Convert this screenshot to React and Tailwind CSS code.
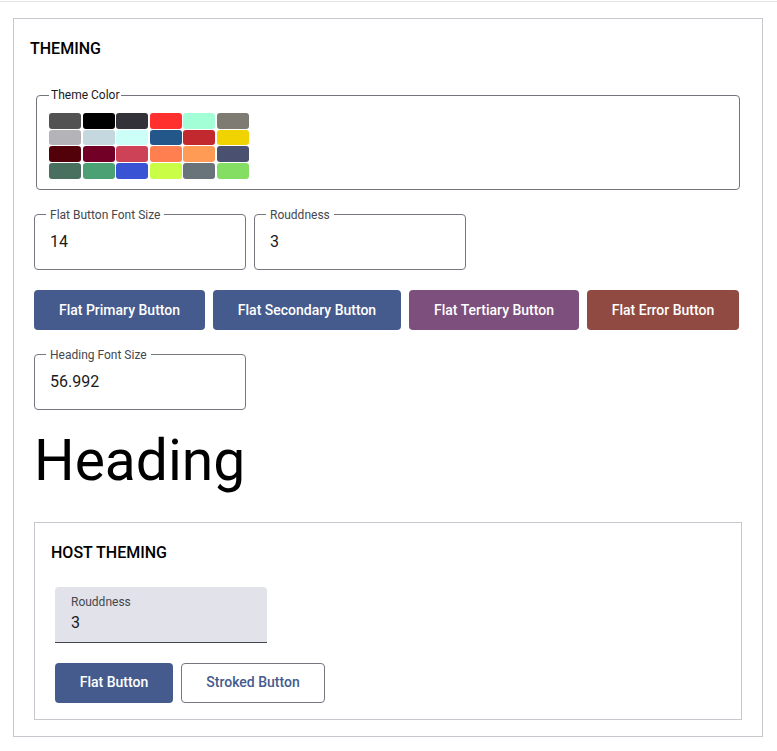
import React from "react";

const swatches = [
  ["#525252", "#000000", "#333238", "#ff302e", "#a3ffd6", "#7e7b73"],
  ["#b3b3b8", "#c5d8e0", "#ccfff7", "#235789", "#c1292e", "#f1d302"],
  ["#52000a", "#720026", "#ce4257", "#ff7f51", "#ff9b54", "#4a5170"],
  ["#49705e", "#4ba173", "#3853d4", "#c9fd46", "#68737a", "#83de63"],
];

function OutlinedField({ label, value }) {
  return (
    <fieldset className="w-[212px] border border-[#74777f] rounded-[4px] pl-[15px] pr-[15px] pt-[7px] pb-[15px]">
      <legend className="-ml-1 px-1 text-[12px] leading-4 text-[#44474e]">{label}</legend>
      <div className="text-[16px] leading-6 text-[#1a1b21]">{value}</div>
    </fieldset>
  );
}

function Btn({ children, color, width }) {
  return (
    <button
      className={`h-10 rounded-[4px] text-white text-[14px] font-medium leading-5 ${color} ${width}`}
    >
      {children}
    </button>
  );
}

export default function App() {
  return (
    <div className="bg-white min-h-[751px] pt-px font-['Roboto',sans-serif] text-[#1a1b21]">
      <div className="h-px bg-[#e3e3e6]" />
      <div className="mt-4 ml-[13px] w-[750px] border border-[#c8c8cf] p-4">
        <div className="mt-[2px] text-[16px] leading-6 font-medium text-black">THEMING</div>

        <fieldset className="mt-[26px] mx-[6px] border border-[#74747e] rounded-[4px] pl-[12px] pr-3 pt-[10px] pb-[10px]">
          <legend className="px-[2px] text-[12px] leading-4 text-[#1a1b21]">Theme Color</legend>
          <div className="flex flex-col gap-[1.2px]">
            {swatches.map((row, i) => (
              <div key={i} className="flex gap-[1.5px]">
                {row.map((c) => (
                  <div key={c} className="w-[32px] h-[15.5px] rounded-[3px]" style={{ backgroundColor: c }} />
                ))}
              </div>
            ))}
          </div>
        </fieldset>

        <div className="mt-[17px] mx-1 flex gap-2">
          <OutlinedField label="Flat Button Font Size" value="14" />
          <OutlinedField label="Rouddness" value="3" />
        </div>

        <div className="mt-5 mx-1 flex gap-2">
          <Btn color="bg-[#455b8e]" width="w-[171px]">Flat Primary Button</Btn>
          <Btn color="bg-[#455b8e]" width="w-[188px]">Flat Secondary Button</Btn>
          <Btn color="bg-[#7c4f7c]" width="w-[170px]">Flat Tertiary Button</Btn>
          <Btn color="bg-[#904a42]" width="w-[152px]">Flat Error Button</Btn>
        </div>

        <div className="mt-[17px] mx-1">
          <OutlinedField label="Heading Font Size" value="56.992" />
        </div>

        <h1 className="mt-[19px] mx-1 text-[56.992px] leading-[64px] font-normal text-black">Heading</h1>

        <div className="mt-[29px] mx-1 border border-[#c8c8cf] p-4">
          <div className="mt-[2px] text-[16px] leading-6 font-medium text-black">HOST THEMING</div>
          <div className="mt-[22px] ml-1 w-[212px] h-[56px] bg-[#e1e2ea] rounded-t-[4px] border-b border-[#44474e] pl-4 pt-[7px]">
            <div className="text-[12px] leading-4 text-[#44474e]">Rouddness</div>
            <div className="mt-px text-[16px] leading-6 text-[#1a1b21]">3</div>
          </div>
          <div className="mt-5 ml-1 flex gap-2">
            <button className="h-10 w-[118px] rounded-[4px] bg-[#455b8e] text-white text-[14px] font-medium">Flat Button</button>
            <button className="h-10 w-[144px] rounded-[4px] border border-[#74777f] text-[#455b8e] text-[14px] font-medium">Stroked Button</button>
          </div>
        </div>
      </div>
    </div>
  );
}
